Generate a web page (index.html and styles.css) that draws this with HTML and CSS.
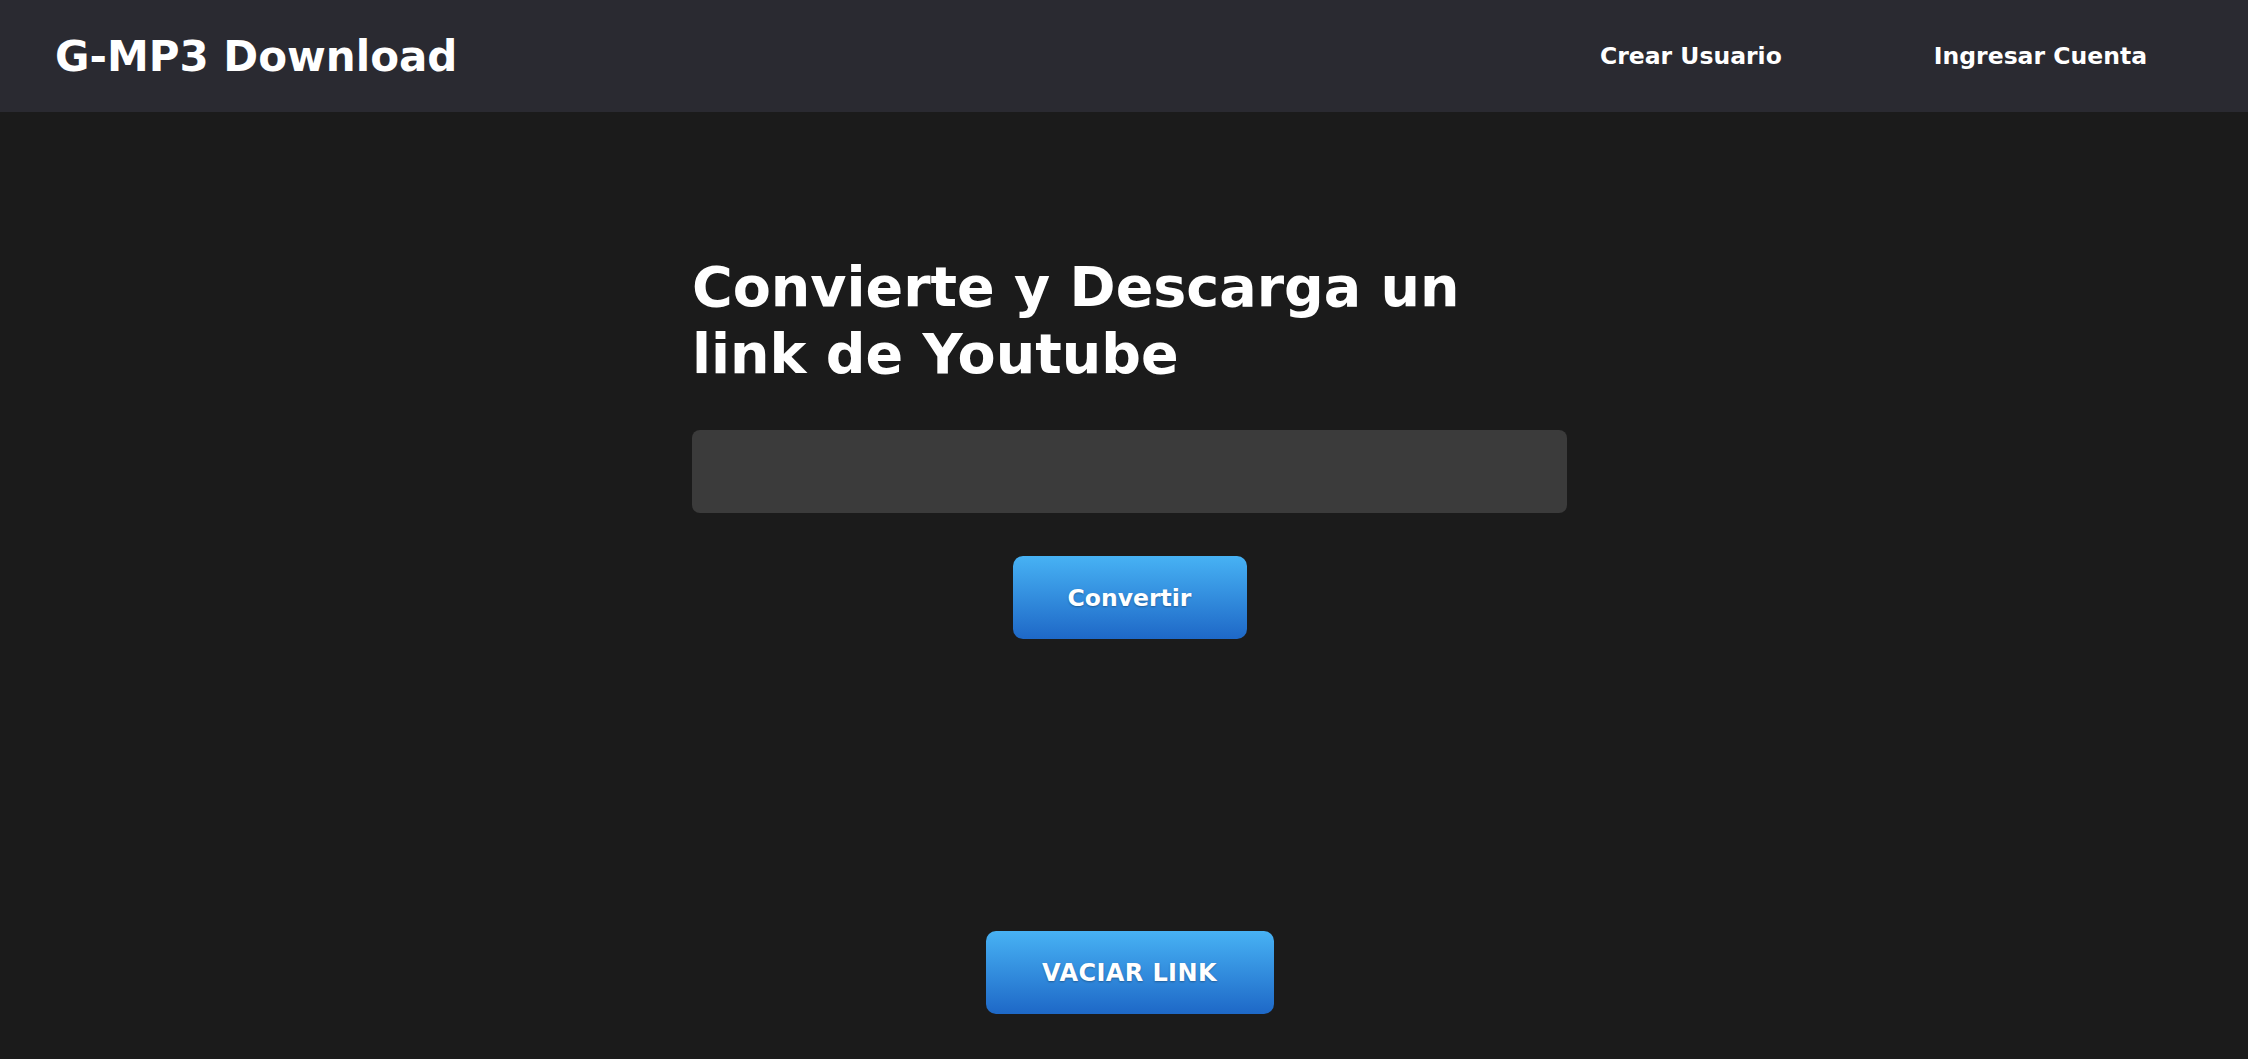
FILE: index.html
```html
<!DOCTYPE html>
<html lang="es">
<head>
<meta charset="utf-8">
<title>G-MP3 Download</title>
<link rel="stylesheet" href="styles.css">
</head>
<body>
<header class="topbar">
  <div class="logo">G-MP3 Download</div>
  <nav class="nav">
    <a class="nav-link" href="#">Crear Usuario</a>
    <a class="nav-link" href="#">Ingresar Cuenta</a>
  </nav>
</header>
<main class="main">
  <section class="panel">
    <h1 class="title">Convierte y Descarga un link de Youtube</h1>
    <input class="url-input" type="text">
    <button class="btn btn-convert">Convertir</button>
    <button class="btn btn-clear">VACIAR LINK</button>
  </section>
</main>
</body>
</html>
```
FILE: styles.css
```css
* { box-sizing: border-box; }
html, body { margin: 0; padding: 0; }
body {
  background: #1b1b1b;
  color: #ffffff;
  font-family: "DejaVu Sans", Verdana, sans-serif;
  min-height: 1059px;
}
.topbar {
  height: 112px;
  background: #2a2a31;
  display: flex;
  align-items: center;
  justify-content: space-between;
  padding: 0 101px 0 55px;
}
.logo {
  font-size: 42px;
  font-weight: bold;
  color: #fff;
}
.nav {
  display: flex;
  gap: 152px;
}
.nav-link {
  color: #fff;
  text-decoration: none;
  font-weight: bold;
  font-size: 23.5px;
}
.main {
  display: flex;
  justify-content: center;
  padding: 141px 0 0 11px;
}
.panel {
  width: 875px;
  display: flex;
  flex-direction: column;
  align-items: center;
}
.title {
  align-self: stretch;
  margin: 0;
  font-size: 55.5px;
  line-height: 67px;
  font-weight: bold;
  padding-right: 100px;
}
.url-input {
  margin-top: 43px;
  width: 100%;
  height: 83px;
  background: #3b3b3b;
  border: none;
  border-radius: 8px;
  outline: none;
  color: #fff;
  font-size: 22px;
  padding: 0 20px;
}
.btn {
  height: 83px;
  border: none;
  border-radius: 10px;
  background: linear-gradient(to bottom, #47b2f4, #1e68c7);
  color: #fff;
  font-family: "DejaVu Sans", Verdana, sans-serif;
  font-weight: bold;
  font-size: 23.5px;
  text-shadow: 0 1px 2px rgba(0, 0, 0, 0.3);
  cursor: pointer;
}
.btn-convert {
  margin-top: 43px;
  width: 234px;
}
.btn-clear {
  margin-top: 292px;
  width: 288px;
  font-size: 24px;
  letter-spacing: 0.4px;
}
```
